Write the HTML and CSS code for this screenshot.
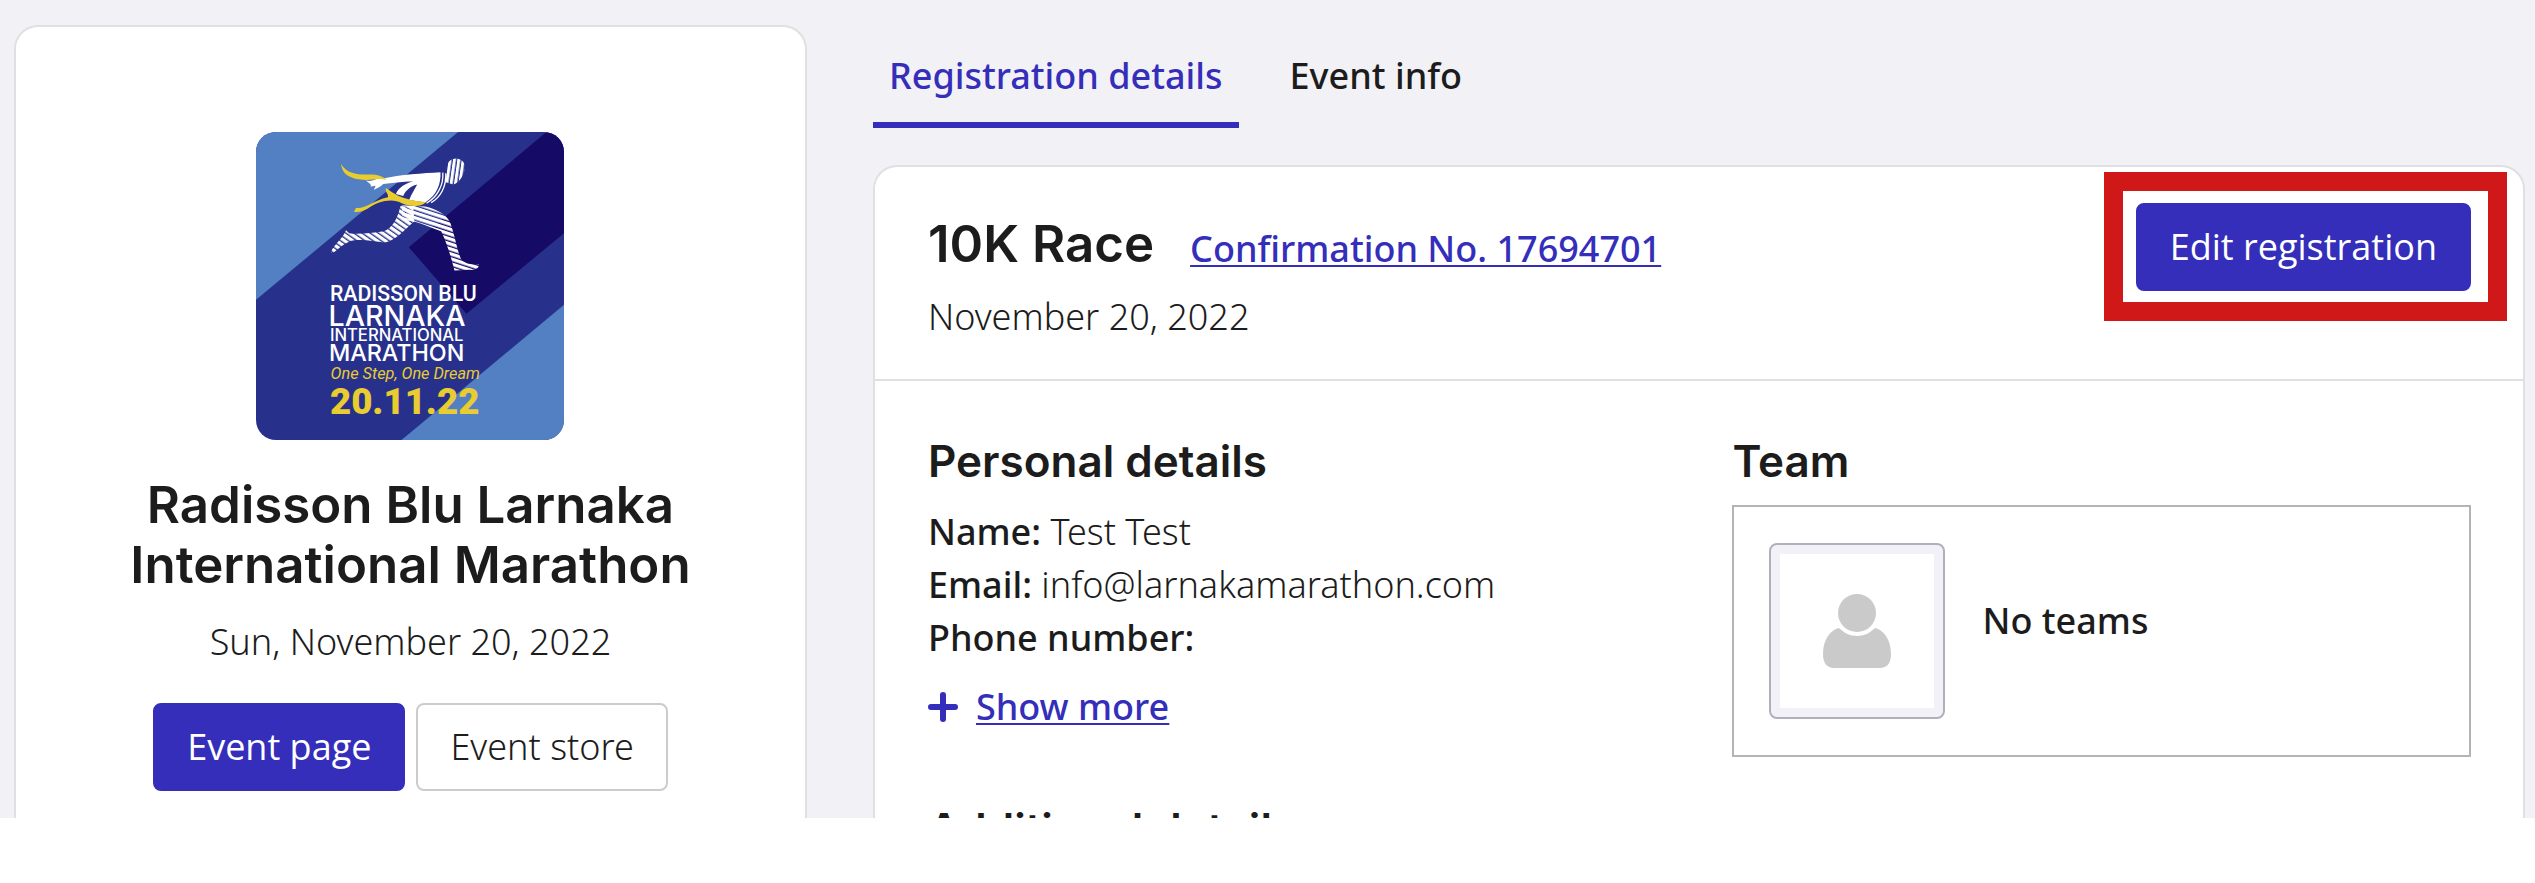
FILE: index.html
```html
<!DOCTYPE html>
<html lang="en">
<head>
<meta charset="utf-8">
<meta name="viewport" content="width=device-width, initial-scale=1">
<title>Registration details</title>
<link rel="stylesheet" href="styles.css">
</head>
<body>
<main class="page">
  <aside class="card event">
    <svg class="event-logo" viewBox="48 36 925 925" role="img" aria-label="Radisson Blu Larnaka International Marathon">
      <defs>
        <pattern id="stripes" width="14" height="14" patternUnits="userSpaceOnUse" patternTransform="rotate(18)">
          <rect width="14" height="10" fill="#fff"/>
        </pattern>
        <pattern id="stripes-steep" width="13" height="13" patternUnits="userSpaceOnUse" patternTransform="rotate(8)">
          <rect width="9" height="13" fill="#fff"/>
        </pattern>
        <pattern id="stripes-back" width="14" height="14" patternUnits="userSpaceOnUse" patternTransform="rotate(35)">
          <rect width="14" height="10" fill="#fff"/>
        </pattern>
      </defs>
      <rect x="48" y="36" width="925" height="925" fill="#27318c"/>
      <path d="M48 36H655L48 540Z" fill="#5280c3"/>
      <path d="M973 555V961H485Z" fill="#5280c3"/>
      <path d="M920 36H973V340L680 582L507 382Z" fill="#150a66"/>
      <path d="M482 258C472 300 455 326 432 334C395 340 350 344 328 340L318 331C312 350 292 366 280 384C273 394 272 402 280 399C294 388 310 372 326 366C345 354 400 364 436 368C474 358 500 322 524 304L520 262Z" fill="url(#stripes-back)"/>
      <path d="M486 256L556 260C590 268 622 284 632 310C646 350 652 392 664 418C680 436 700 432 718 434C718 446 704 452 688 450L644 452C636 420 622 370 604 334C580 326 550 312 520 304L486 300Z" fill="url(#stripes)"/>
      <path d="M430 176C480 164 550 160 602 157C604 190 592 226 556 248L508 240C514 224 526 206 532 194C510 200 498 212 490 228L468 222C478 200 500 190 520 184C486 186 456 190 430 192C424 200 412 204 402 210C406 200 410 196 404 198L392 200C396 194 388 190 378 182C394 186 406 178 416 174Z" fill="#fff"/>
      <path d="M609 158C612 196 592 232 560 250M618 160C620 200 602 232 574 248" fill="none" stroke="#fff" stroke-width="4"/>
      <path d="M622 150C618 128 634 114 654 116C674 120 680 138 672 158C666 178 652 192 640 194L616 186C612 176 620 162 622 150Z" fill="url(#stripes-steep)"/>
      <path d="M304 132C318 158 346 164 380 164C408 162 430 168 440 180C418 174 400 180 376 180C340 178 306 168 304 132Z" fill="#e8cc30"/>
      <path d="M438 204C454 214 470 228 498 236C520 244 540 244 558 246C548 260 514 262 486 250C466 238 440 240 418 248C388 258 376 280 342 276L348 264C376 268 400 242 444 232C448 222 434 216 438 204Z" fill="#e8cc30"/>
      <g class="logo-text">
        <text x="270" y="545" font-size="64">RADISSON BLU</text>
        <text x="266" y="618" font-size="86" class="logo-wide">LARNAKA</text>
        <text x="270" y="663" font-size="50" class="logo-wide">INTERNATIONAL</text>
        <text x="267" y="724" font-size="70" class="logo-wide">MARATHON</text>
        <text x="272" y="778" font-size="49" class="logo-motto">One Step, One Dream</text>
        <text x="270" y="883" font-size="110" class="logo-date">20.11.22</text>
      </g>
    </svg>
    <h1 class="title">Radisson Blu Larnaka International Marathon</h1>
    <p class="event-date">Sun, November 20, 2022</p>
    <div class="event-actions">
      <button type="button" class="button button-primary">Event page</button>
      <button type="button" class="button">Event store</button>
    </div>
  </aside>

  <section class="content">
    <nav class="tabs">
      <a class="tab tab-active" href="#details">Registration details</a>
      <a class="tab" href="#info">Event info</a>
    </nav>

    <article class="card registration" id="details">
      <header class="registration-header">
        <div class="registration-summary">
          <div class="registration-title">
            <h2 class="title">10K Race</h2>
            <a class="link" href="#confirmation">Confirmation No. 17694701</a>
          </div>
          <p>November 20, 2022</p>
        </div>
        <div class="highlight">
          <button type="button" class="button button-primary">Edit registration</button>
        </div>
      </header>

      <div class="registration-body">
        <section>
          <h3 class="subtitle">Personal details</h3>
          <p><span class="label">Name:</span> Test Test</p>
          <p><span class="label">Email:</span> info@larnakamarathon.com</p>
          <p><span class="label">Phone number:</span></p>
          <a class="show-more" href="#more">
            <svg class="plus" viewBox="0 0 30 30" aria-hidden="true"><path d="M15 3V27M3 15H27" stroke="currentColor" stroke-width="6" stroke-linecap="round"/></svg>
            <span class="link">Show more</span>
          </a>
          <h3 class="subtitle">Additional details</h3>
        </section>
        <section>
          <h3 class="subtitle">Team</h3>
          <div class="team">
            <div class="avatar">
              <svg class="avatar-icon" viewBox="0 0 68 74" aria-hidden="true">
                <path d="M16 34C21 39 27 42 34 42S47 39 52 34C61 36 68 46 68 60C68 69 64 74 57 74H11C4 74 0 69 0 60C0 46 7 36 16 34Z"/>
                <circle cx="34" cy="19" r="19"/>
              </svg>
            </div>
            <p class="team-name">No teams</p>
          </div>
        </section>
      </div>
    </article>
  </section>
</main>
</body>
</html>
```
FILE: styles.css
```css
* {
  box-sizing: border-box;
}

body {
  margin: 0;
  background: #fff;
  color: #1c1c1c;
  font: 300 36px/53px "Noto Sans", "Open Sans", sans-serif;
}

h1, h2, h3, p {
  margin: 0;
}

.page {
  display: grid;
  grid-template-columns: 24fr 50fr;
  gap: 66px;
  height: calc(100vh - 65px);
  padding: 25px 10px 0 14px;
  overflow: hidden;
  background: #f2f1f6;
}

.card {
  border: 2px solid #e0e0e4;
  border-bottom: 0;
  border-radius: 24px 24px 0 0;
  background: #fff;
}

.title {
  font: 600 51px/60px Inter, sans-serif;
}

.subtitle {
  margin-bottom: 20px;
  font: 600 44px/48px Inter, sans-serif;
}

.link {
  color: #342eba;
  font-weight: 500;
  text-decoration: underline;
  text-decoration-thickness: 2px;
  text-underline-offset: 3px;
}

.label {
  font-weight: 500;
}

.button {
  padding: 16px 32px;
  border: 2px solid #ccc;
  border-radius: 8px;
  background: #fff;
  color: #1c1c1c;
  font: inherit;
  line-height: 52px;
  white-space: nowrap;
}

.button-primary {
  border-color: #342eba;
  background: #342eba;
  color: #fff;
  font-family: "Open Sans", sans-serif;
  font-weight: 400;
}

/* Event card */

.event {
  display: flex;
  flex-direction: column;
  align-items: center;
  padding: 105px 80px 0;
  text-align: center;
}

.event-logo {
  width: 308px;
  height: 308px;
  flex: none;
  margin-bottom: 35px;
  border-radius: 20px;
}

.logo-text {
  fill: #fff;
  font-family: Roboto, sans-serif;
  font-weight: 500;
}

.logo-wide {
  font-family: Inter, sans-serif;
}

.logo-motto {
  fill: #e8cc30;
  font-style: italic;
  font-weight: 400;
}

.logo-date {
  fill: #e8cc30;
  font-weight: 900;
}

.event-date {
  margin: 20px 0 35px;
}

.event-actions {
  display: flex;
  gap: 11px;
}

/* Tabs */

.content {
  display: flex;
  flex-direction: column;
}

.tabs {
  display: flex;
  gap: 35px;
  margin-bottom: 37px;
}

.tab {
  padding: 24px 16px 20px;
  border-bottom: 6px solid transparent;
  color: #1c1c1c;
  font-weight: 500;
  text-decoration: none;
}

.tab-active {
  border-color: #342eba;
  color: #342eba;
}

/* Registration card */

.registration {
  flex: 1;
}

.registration-header {
  display: flex;
  justify-content: space-between;
  align-items: flex-start;
  padding: 36px 52px 36px 53px;
  border-bottom: 2px solid #e0e0e4;
}

.registration-summary {
  padding-top: 11px;
}

.registration-title {
  display: flex;
  align-items: baseline;
  gap: 36px;
  margin-bottom: 15px;
}

.highlight {
  position: relative;
}

.highlight::after {
  content: "";
  position: absolute;
  inset: -31px -36px -30px -32px;
  border: 19px solid #d01818;
  pointer-events: none;
}

.registration-body {
  display: grid;
  grid-template-columns: 1fr 1fr;
  gap: 66px;
  padding: 56px 52px 0 53px;
}

.show-more {
  display: flex;
  align-items: center;
  gap: 18px;
  margin: 16px 0 72px;
  color: #342eba;
  text-decoration: none;
}

.plus {
  width: 30px;
  height: 30px;
}

.team {
  display: flex;
  align-items: center;
  gap: 37px;
  padding: 36px 35px;
  border: 2px solid #b4b4b6;
}

.avatar {
  display: grid;
  place-items: center;
  width: 176px;
  height: 176px;
  border: 2px solid #b0b0bc;
  border-radius: 8px;
  background: #fff;
  box-shadow: inset 0 0 0 9px #f2f1f7;
}

.avatar-icon {
  width: 68px;
  height: 74px;
  fill: #cacaca;
}

.team-name {
  padding-bottom: 22px;
  font-weight: 500;
}
```
